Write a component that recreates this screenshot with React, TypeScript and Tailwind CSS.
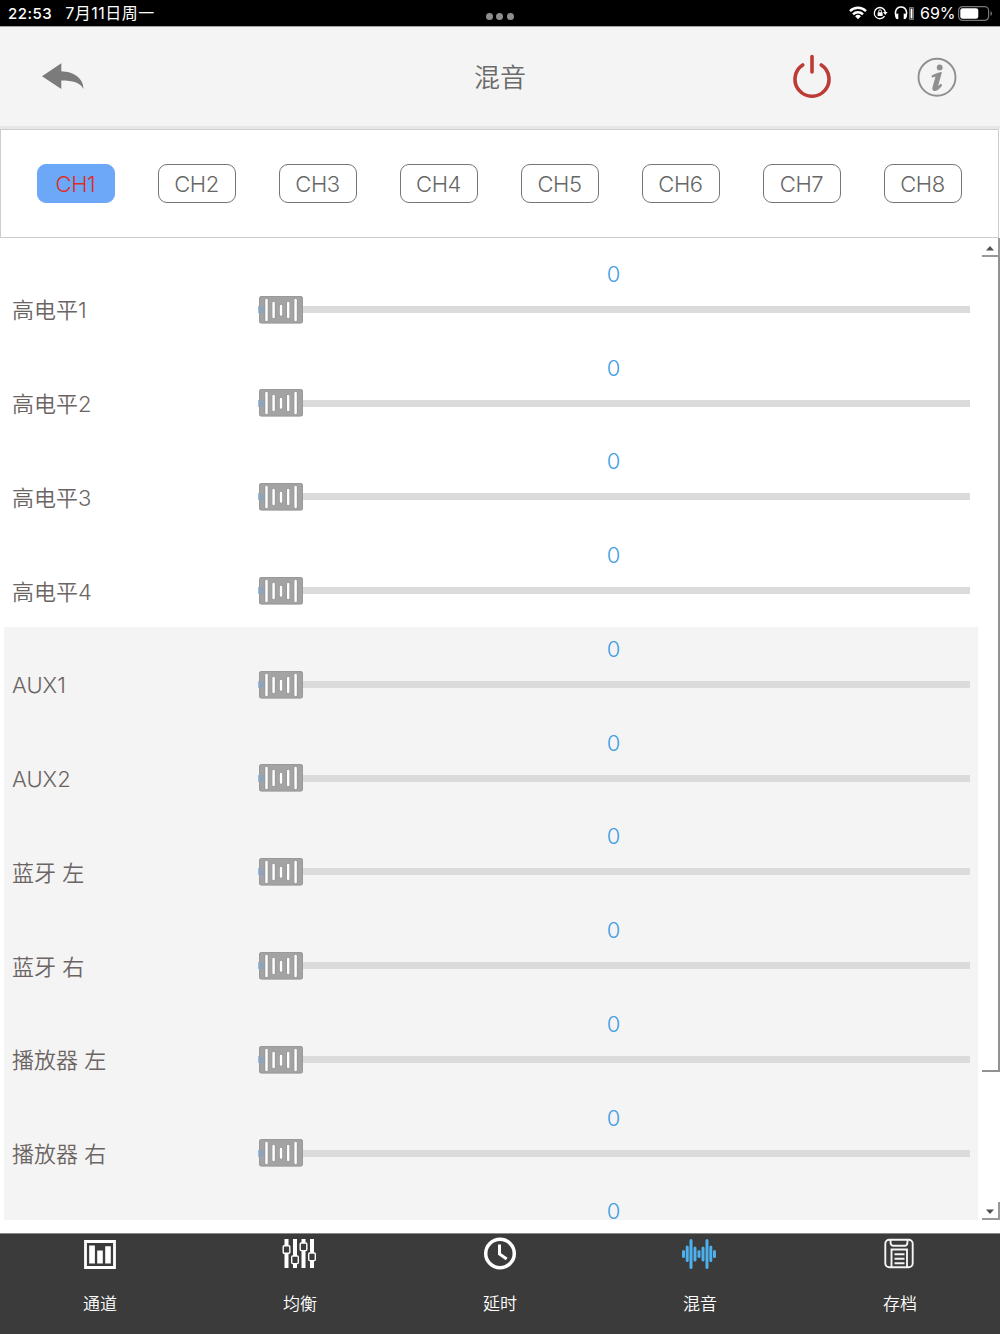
import React, { useState } from "react";

interface TabItem {
  label: string;
  icon: React.ReactNode;
}

const channels = ["CH1", "CH2", "CH3", "CH4", "CH5", "CH6", "CH7", "CH8"];

const highLevel = ["高电平1", "高电平2", "高电平3", "高电平4"];
const others = ["AUX1", "AUX2", "蓝牙 左", "蓝牙 右", "播放器 左", "播放器 右"];

const StatusBar = () => (
  <div className="h-[26px] shrink-0 bg-black text-white grid grid-cols-3 items-center text-[15px] leading-none">
    <div className="flex items-center gap-[13px] pl-2">
      <span className="font-medium tracking-[0.5px]">22:53</span>
      <span className="text-[16px] tracking-[0.5px]">7月11日周一</span>
    </div>
    <div className="flex justify-center gap-[3.5px] pt-[7px]">
      <i className="size-[7px] rounded-full bg-[#8e8e8e]" />
      <i className="size-[7px] rounded-full bg-[#8e8e8e]" />
      <i className="size-[7px] rounded-full bg-[#8e8e8e]" />
    </div>
    <div className="flex justify-end items-center pr-[7px]">
      <svg width="18" height="14" viewBox="0 0 18 14" fill="none" stroke="white" strokeWidth="2.4">
        <path d="M1 5.1a11.3 11.3 0 0 1 16 0M4 8.4a7 7 0 0 1 10 0" />
        <path d="M9 13.2 6.1 10.3a4.1 4.1 0 0 1 5.8 0z" fill="white" stroke="none" />
      </svg>
      <svg className="ml-[6px]" width="15" height="14" viewBox="0 0 15 14" fill="none" stroke="white" strokeWidth="1.3">
        <path d="M11.6 10.2a5.6 5.6 0 1 1 .8-4.2" />
        <path d="m10 5.9 4.6 0-2.3 3z" fill="white" stroke="none" />
        <rect x="4.6" y="6.3" width="5" height="3.7" rx=".6" fill="white" stroke="none" />
        <path d="M5.7 6.5V5.3a1.4 1.4 0 0 1 2.8 0v1.2" strokeWidth="1" />
      </svg>
      <svg className="ml-[6px]" width="22" height="14" viewBox="0 0 22 14" fill="none">
        <path d="M3.4 12.3C.2 8.3.9 1 7 1s6.8 7.3 3.6 11.3" stroke="white" strokeWidth="1.6" />
        <path d="M4.3 7.6v5.6c-2 0-3-1.2-3-2.8s1-2.8 3-2.8zM9.700 7.600v5.600c2 0 3-1.200 3-2.800s-1-2.800-3-2.800z" fill="white" />
        <path d="M15.5 1.5h4v12h-4z" stroke="#777" />
        <path d="M16.5 2.5h2v10h-2z" fill="white" />
      </svg>
      <span className="ml-[4px] text-[16px] w-[35px]">69%</span>
      <svg className="ml-[3px]" width="35" height="15" viewBox="0 0 35 15" fill="none">
        <rect x=".6" y=".6" width="30" height="13.8" rx="4" stroke="#777" strokeWidth="1.2" />
        <rect x="2.3" y="2.3" width="18" height="10.4" rx="2.3" fill="white" />
        <path d="M32.5 5.2c2 .7 2 3.9 0 4.6z" fill="#777" />
      </svg>
    </div>
  </div>
);

const Header = () => (
  <header className="h-[103px] shrink-0 bg-[#f4f4f4] border-t border-b-[3px] border-t-[#a5a5a5] border-b-[#e7e7e7] grid grid-cols-3 items-center">
    <button className="ml-[41px] w-fit">
      <svg width="44" height="28" viewBox="0 0 44 28" fill="#7b7b7b">
        <path d="M1 13.300 20.300.3v8C32 8.600 42.500 15 42.500 26c-3-6.800-11-8.600-22.200-8.600v8.600z" />
      </svg>
    </button>
    <h1 className="pt-[2px] text-center text-[26px] leading-none text-[#6a6a6a] font-[350]">混音</h1>
    <div className="flex items-center justify-end gap-[85px] pr-[43px]">
      <button className="-mt-[2px]">
        <svg width="40" height="44" viewBox="0 0 40 44" fill="none" stroke="#bd3a35" strokeWidth="3.6" strokeLinecap="round">
          <path d="M20 2.500v15.500M10.700 11a17 17 0 1 0 18.600 0" />
        </svg>
      </button>
      <button>
        <svg width="40" height="40" viewBox="0 0 40 40" fill="none">
          <circle cx="20" cy="20.3" r="18.5" stroke="#8f8f8f" strokeWidth="1.9" />
          <circle cx="22.7" cy="10.4" r="2.9" fill="#8f8f8f" />
          <path
            d="M15.3 18.7c2.7-.9 5.200-2.300 8.900-3.100l-3.700 13.300c-.3 1.300.5 1.100 3.200-1.500l.8.900c-2.300 3.100-4.700 5.200-6.800 5.200-1.700 0-2.100-1.600-1.500-3.600l2.700-9.500c.3-1.200-.2-1.400-1.400-1.200l-2.200.8z"
            fill="#8f8f8f"
            stroke="#8f8f8f"
            strokeWidth="1.2"
            strokeLinejoin="round"
          />
        </svg>
      </button>
    </div>
  </header>
);

const SliderThumb = () => (
  <svg className="absolute left-px -top-[10.250px]" width="44" height="28" viewBox="0 0 44 28">
    <rect width="44" height="27.500" rx="2.500" fill="#a3a3a3" />
    <rect x=".5" y=".5" width="43" height="26.500" rx="2" fill="none" stroke="#929292" strokeOpacity=".6" />
    <path d="M0 10.500h8v7H0z" fill="#94a3b4" />
    <path
      d="M7.500 4v20M14.600 7v14M22 10v8.500M29.200 7v14M36.600 4v20"
      stroke="#8d8d8d"
      strokeWidth="3.600"
      strokeLinecap="round"
    />
    <path
      d="M7.500 4v20M14.600 7v14M22 10v8.500M29.200 7v14M36.600 4v20"
      stroke="white"
      strokeWidth="2.500"
      strokeLinecap="round"
    />
  </svg>
);

const MixRow = ({ label, value = 0 }: { label: string; value?: number }) => (
  <div className="h-[93.75px] flex pl-2">
    <div className="w-[246px] pt-[43.5px] text-[22px] leading-[31px] text-[#6b6463] font-[350]">{label}</div>
    <div className="w-[711px] pt-[14px]">
      <div className="text-center text-[22px] leading-[16px] font-[350] text-[#3f9de3]">{value}</div>
      <div className="relative mt-[24px] w-[712px] h-[7px] bg-[#dbdbdb]">
        <div className="h-full w-2 bg-[#8fc0f5]" />
        <SliderThumb />
      </div>
    </div>
  </div>
);

const ScrollBar = () => (
  <div className="w-[22px] shrink-0 flex flex-col pl-1">
    <div className="h-[19px] pt-[3px] border-b-2 border-r-2 border-[#989898] grid place-items-center">
      <svg width="8" height="5" viewBox="0 0 8 5" fill="#505050">
        <path d="M4 0 8 4.5H0z" />
      </svg>
    </div>
    <div className="h-[815px] border-b-2 border-r-2 border-[#929292]" />
    <div className="flex-1" />
    <div className="h-[18px] pt-[2px] border-b-2 border-r-2 border-[#989898] grid place-items-center">
      <svg width="8" height="5" viewBox="0 0 8 5" fill="#505050">
        <path d="M0 .5h8L4 5z" />
      </svg>
    </div>
  </div>
);

const tabs: TabItem[] = [
  {
    label: "通道",
    icon: (
      <svg width="34" height="34" viewBox="0 0 34 34" fill="white">
        <path d="M2.500 4.500h29v26h-29z" fill="none" stroke="white" strokeWidth="2.800" />
        <path d="M6.200 8.500h5.700v18H6.200zM14.200 13.500h5.600v13h-5.600zM22.200 9.200h5.600v17.300h-5.600z" />
      </svg>
    ),
  },
  {
    label: "均衡",
    icon: (
      <svg className="mr-[2px]" width="34" height="34" viewBox="0 0 34 34" fill="#3b3b3b" stroke="white">
        <path d="M4.500 2v29M13 2v29M21.500 2v29M30 2v29" strokeWidth="4" />
        <g strokeWidth="1.400">
          <rect x="1.200" y="8.700" width="6.600" height="7.600" rx="1" />
          <rect x="9.700" y="19" width="6.600" height="7.600" rx="1" />
          <rect x="18.200" y="6" width="6.600" height="7.600" rx="1" />
          <rect x="26.700" y="16" width="6.600" height="7.600" rx="1" />
        </g>
      </svg>
    ),
  },
  {
    label: "延时",
    icon: (
      <svg width="34" height="34" viewBox="0 0 34 34" fill="none" stroke="white">
        <circle cx="17" cy="16.500" r="14.300" strokeWidth="3.500" />
        <path d="M16.500 7.500V17l7.200 5" strokeWidth="3" />
      </svg>
    ),
  },
  {
    label: "混音",
    icon: (
      <svg className="mr-[2px]" width="34" height="34" viewBox="0 0 34 34" stroke="#4fb0ee" strokeWidth="3" strokeLinecap="round">
        <path d="M1.500 14.500v5M5.200 10v13.500M9 3.500v27M13 11v12M17 14.500v5M21 11v12M25 3.500v27M28.800 10v13.500M32.500 14.500v5" />
      </svg>
    ),
  },
  {
    label: "存档",
    icon: (
      <svg className="mr-[2px]" width="34" height="34" viewBox="0 0 34 34" fill="none" stroke="#f4f4f4" strokeWidth="1.900">
        <rect x="3.300" y="2.800" width="27.400" height="27.400" rx="4" />
        <path d="M8.500 3v1.500c0 3 1 4.300 3 4.300h11c2 0 3-1.300 3-4.300V3M9.500 30V12.500h15.500V30M12.500 17.200h10M12.500 21.700h10M12.500 26.200h10" />
      </svg>
    ),
  },
];

const App: React.FC = () => {
  const [active, setActive] = useState("CH1");

  return (
    <div className="w-[1000px] h-[1334px] flex flex-col overflow-hidden bg-white font-['Inter','Noto_Sans_CJK_SC',sans-serif]">
      <StatusBar />
      <Header />

      {/* Channels */}
      <div className="h-[109px] w-[999px] shrink-0 border border-[#cdcdcd] flex items-center justify-between px-[36px]">
        {channels.map((ch) => (
          <button
            key={ch}
            onClick={() => setActive(ch)}
            className={`w-[78px] h-[39px] pr-px rounded-[9px] border-[1.5px] text-[22px] leading-none font-[350] tracking-[-0.4px] ${
              active === ch ? "bg-[#6ca7f8] border-[#6ca7f8] text-[#dc3024]" : "border-[#757575] text-[#666666]"
            }`}
          >
            {ch}
          </button>
        ))}
      </div>

      {/* Mixer */}
      <div className="h-[982px] shrink-0 flex">
        <div className="w-[978px] pl-1 pt-[13.75px] overflow-hidden">
          {highLevel.map((name) => (
            <MixRow key={name} label={name} />
          ))}
          <div className="bg-[#f4f4f4]">
            {others.map((name) => (
              <MixRow key={name} label={name} />
            ))}
            <MixRow label="" />
          </div>
        </div>
        <ScrollBar />
      </div>

      {/* Bottom tabs */}
      <nav className="mt-[13px] flex-1 grid grid-cols-5 bg-[#3b3b3b] border-t border-[#888888]">
        {tabs.map((tab) => (
          <button key={tab.label} className="flex flex-col items-center pt-[3px] text-white">
            {tab.icon}
            <span className="mt-[25px] text-[17px] leading-[17px] font-[350]">{tab.label}</span>
          </button>
        ))}
      </nav>
    </div>
  );
};

export default App;
